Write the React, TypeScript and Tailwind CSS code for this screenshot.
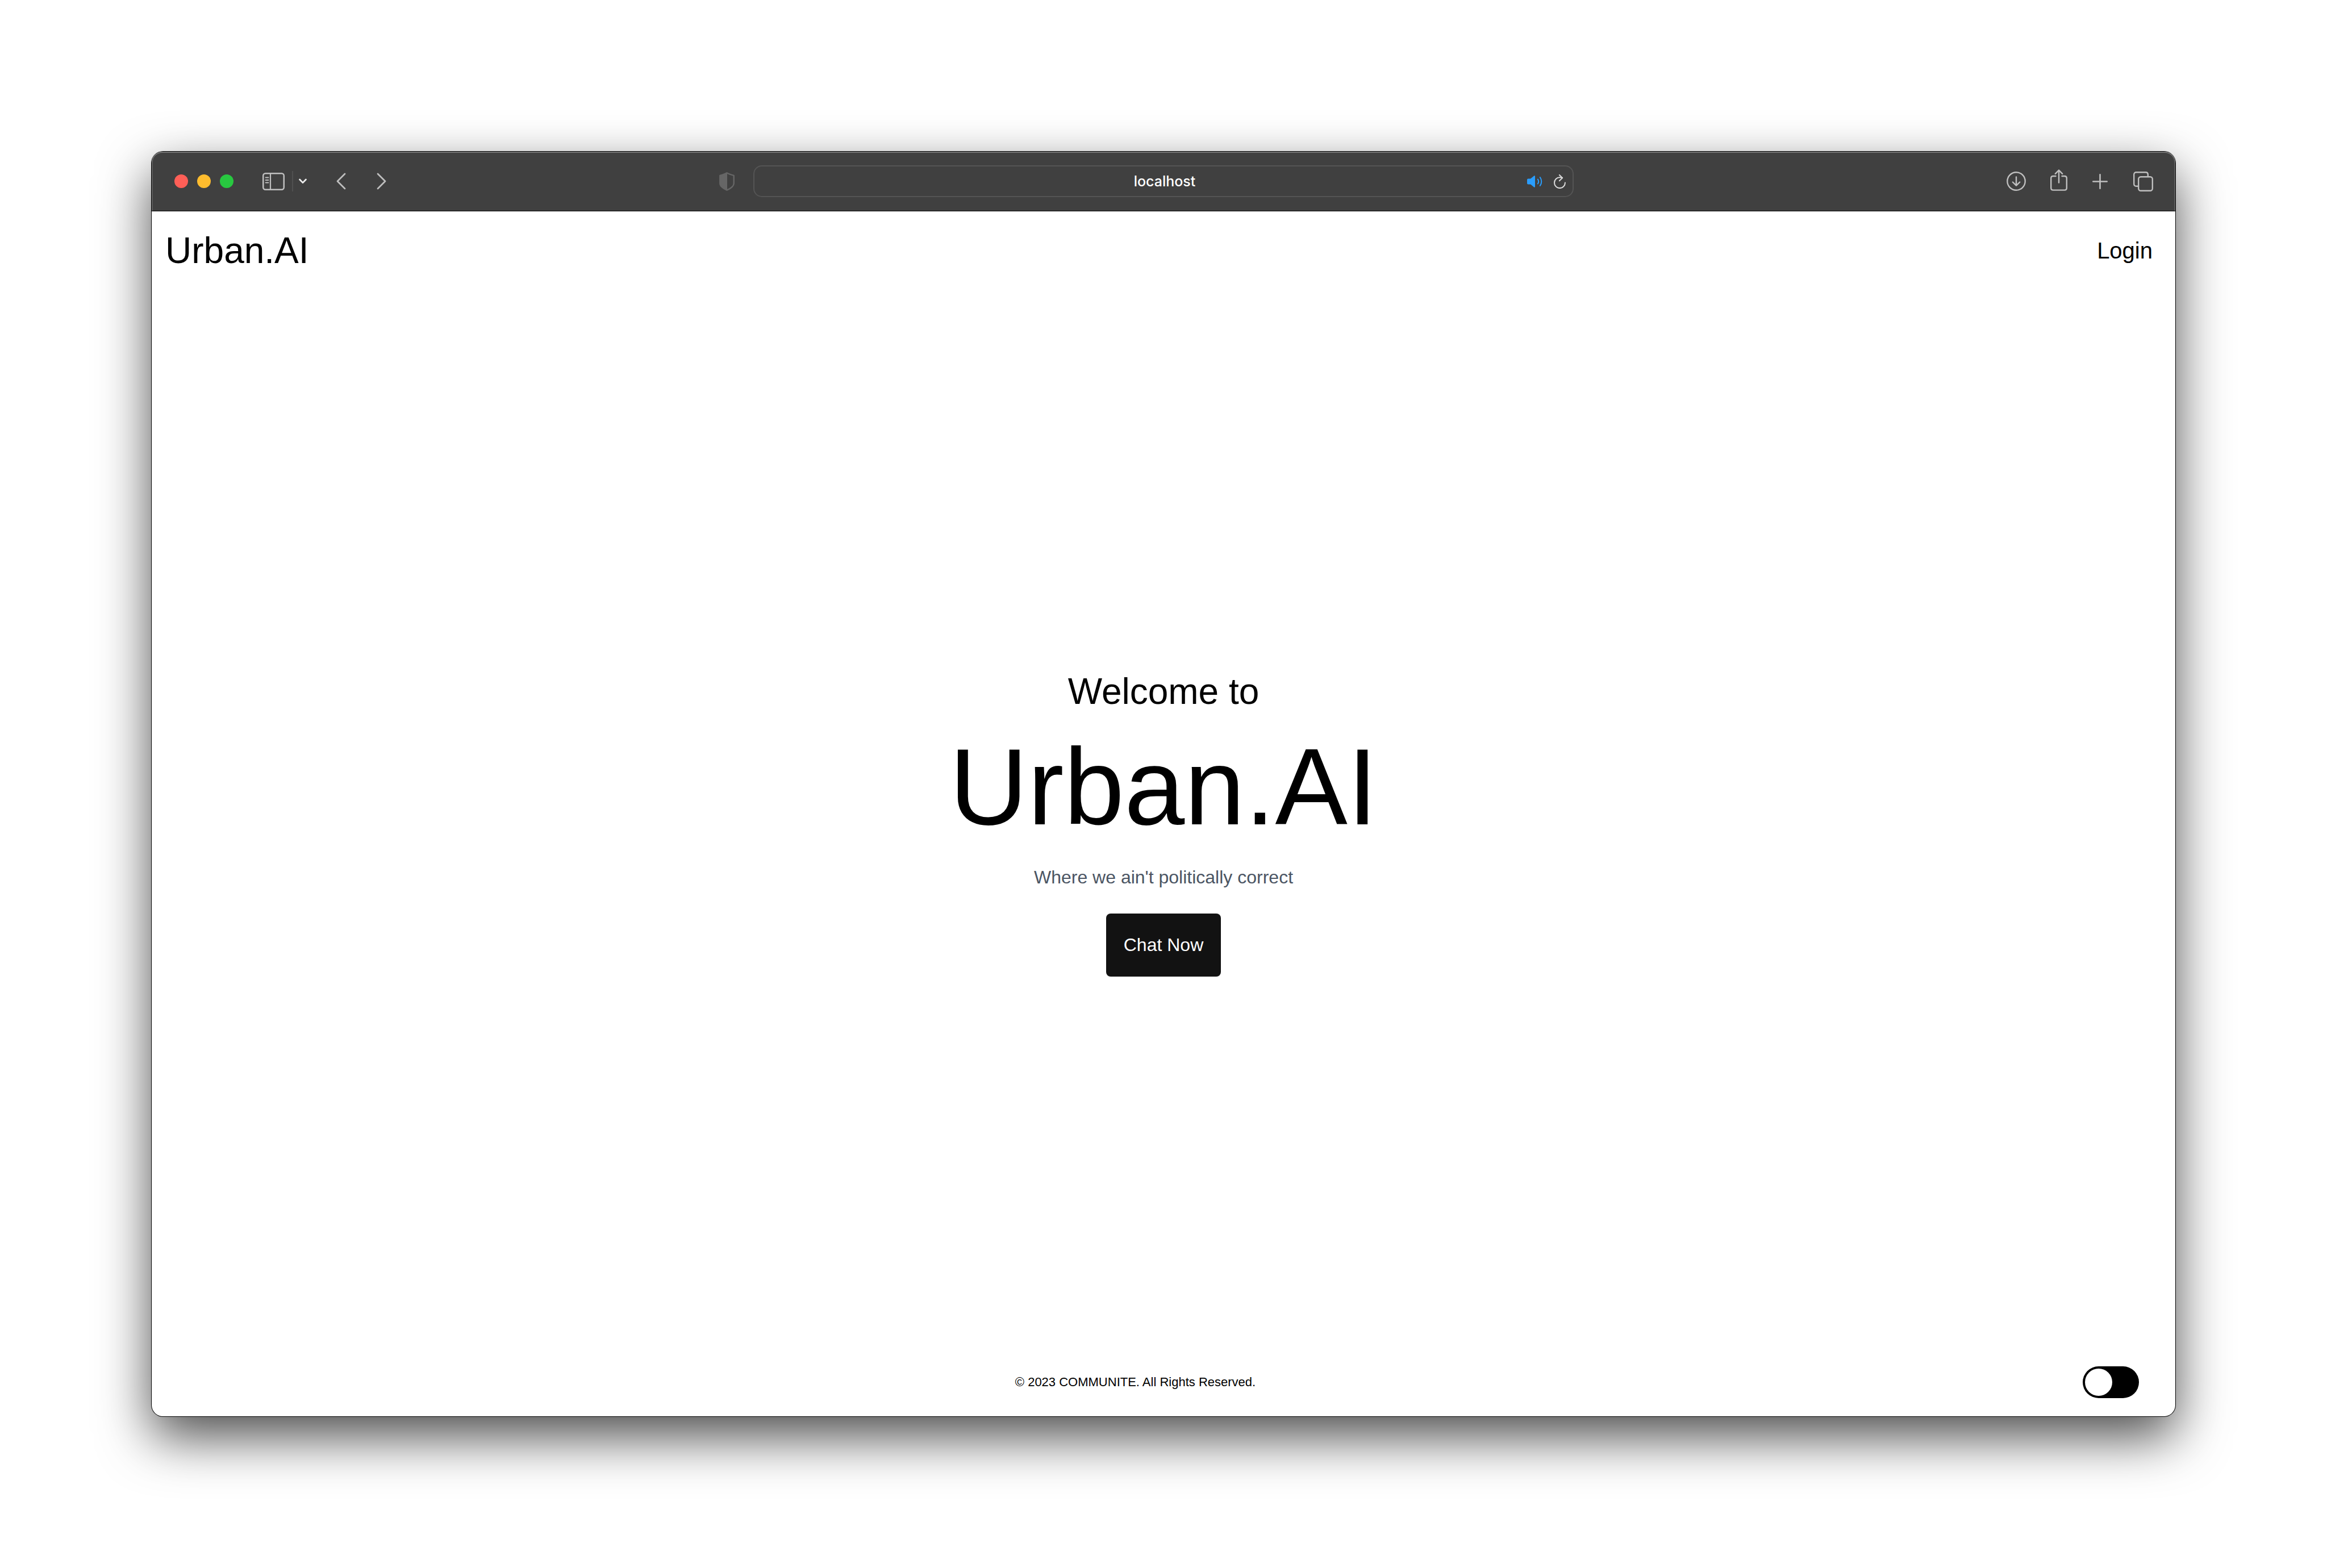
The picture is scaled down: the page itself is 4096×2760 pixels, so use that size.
import { useState } from "react";

const iconButton = "flex items-center justify-center shrink-0 text-[#bfbfbf]";

function WindowControls() {
  return (
    <div className="flex gap-4">
      <button aria-label="Close" className="size-6 rounded-full bg-[#ff5f57]" />
      <button aria-label="Minimize" className="size-6 rounded-full bg-[#febc2e]" />
      <button aria-label="Zoom" className="size-6 rounded-full bg-[#28c840]" />
    </div>
  );
}

function Toolbar() {
  return (
    <div className="grid h-[105px] grid-cols-[1fr_minmax(0,1444px)_1fr] items-center rounded-t-[19px] border-b border-black bg-[#404040] shadow-[inset_0_2px_0_#757575,inset_2px_0_0_#5c5c5c,inset_-2px_0_0_#5c5c5c]">
      <div className="flex items-center pl-10">
        <WindowControls />
        <button aria-label="Show sidebar" className={`${iconButton} ml-[51px]`}>
          <svg width="39" height="31" viewBox="0 0 39 31" fill="none" stroke="currentColor">
            <rect x="1.25" y="1.25" width="36.5" height="28.5" rx="4" strokeWidth="2.5" />
            <path d="M14 1v29" strokeWidth="2.2" />
            <path d="M5.500 8.500h5M5.500 13h5M5.500 17.500h5" strokeWidth="1.8" strokeLinecap="round" />
          </svg>
        </button>
        <span className="ml-[13px] h-9 w-0.5 bg-[#505050]" />
        <button aria-label="Tab groups" className="ml-[10px] text-[#ececec]">
          <svg width="14" height="10" viewBox="0 0 14 10" fill="none" stroke="currentColor" strokeWidth="2.8" strokeLinecap="round" strokeLinejoin="round">
            <path d="M1.6 2 7 7.6 12.4 2" />
          </svg>
        </button>
        <button aria-label="Back" className={`${iconButton} ml-[52px]`}>
          <svg width="17" height="30" viewBox="0 0 17 30" fill="none" stroke="currentColor" strokeWidth="2.8" strokeLinecap="round" strokeLinejoin="round">
            <path d="M15 2 2 15l13 13" />
          </svg>
        </button>
        <button aria-label="Forward" className={`${iconButton} ml-[54px]`}>
          <svg width="17" height="30" viewBox="0 0 17 30" fill="none" stroke="currentColor" strokeWidth="2.8" strokeLinecap="round" strokeLinejoin="round">
            <path d="m2 2 13 13L2 28" />
          </svg>
        </button>
        <button aria-label="Privacy report" className="mr-[33px] ml-auto text-[#666666]">
          <svg width="27" height="33" viewBox="0 0 27 33" fill="none">
            <path d="M13.5 1.3c3.2 2 7.200 3.300 12.200 4.600v14c0 5.200-5 8.400-12.200 11.800C6.300 28.300 1.300 25.100 1.300 19.900v-14c5-1.300 9-2.600 12.200-4.600z" stroke="currentColor" strokeWidth="2.4" strokeLinejoin="round" />
            <path d="M14 1v31C6.300 28.300 1 25.100 1 19.900v-14C6 4.600 10.300 3 14 1z" fill="currentColor" />
          </svg>
        </button>
      </div>

      <div className="relative flex h-14 items-center rounded-[15px] border-2 border-[#545454]">
        <input
          aria-label="Address"
          defaultValue="localhost"
          className="h-full w-full bg-transparent pl-1 text-center font-['Inter','Liberation_Sans',sans-serif] text-[25px] font-medium text-white outline-none"
        />
        <div className="absolute right-3 flex items-center gap-5">
          <button aria-label="Mute tab" className="text-[#2a9dfc]">
            <svg width="27" height="21" viewBox="0 0 27 21" fill="none">
              <path d="M0 7.500c0-1.200.8-2 2-2h4.200l6-4.900c.9-.8 1.800-.3 1.800.8v18.200c0 1.100-.9 1.600-1.800.8l-6-4.900H2c-1.200 0-2-.8-2-2z" fill="currentColor" />
              <path d="M18.800 6.500c1.700 2.500 1.700 5.500 0 8M22.800 3c3.300 4.500 3.300 10.500 0 15" stroke="currentColor" strokeWidth="2" strokeLinecap="round" />
            </svg>
          </button>
          <button aria-label="Reload" className="text-[#dcdcdc]">
            <svg width="21" height="25" viewBox="0 0 21 25" fill="none" stroke="currentColor" strokeWidth="2" strokeLinecap="round" strokeLinejoin="round">
              <path d="M19.900 14.500A9.450 9.450 0 1 1 10.500 5.200c1.700 0 3 .2 4.500.7" />
              <path d="m9.900 1 5.300 5.100-5.300 5.200" />
            </svg>
          </button>
        </div>
      </div>

      <div className="flex items-center justify-end pr-[39px]">
        <button aria-label="Downloads" className={iconButton}>
          <svg width="34" height="34" viewBox="0 0 34 34" fill="none" stroke="currentColor" strokeWidth="2.4" strokeLinecap="round" strokeLinejoin="round">
            <circle cx="17" cy="17" r="15.700" />
            <path d="M17 9.500v15M10.800 18.500l6.200 6.200 6.200-6.200" />
          </svg>
        </button>
        <button aria-label="Share" className={`${iconButton} mb-1 ml-[43px]`}>
          <svg width="30" height="38" viewBox="0 0 30 38" fill="none" stroke="currentColor" strokeWidth="2.4" strokeLinecap="round" strokeLinejoin="round">
            <path d="M9.500 12H5c-2.500 0-3.800 1.300-3.800 3.800v17c0 2.500 1.300 3.800 3.800 3.800h20c2.500 0 3.800-1.300 3.800-3.800v-17c0-2.500-1.300-3.800-3.800-3.800h-4.500" />
            <path d="M15 23.500V2M8.800 7.800 15 1.600l6.200 6.200" />
          </svg>
        </button>
        <button aria-label="New tab" className={`${iconButton} ml-[44px]`}>
          <svg width="27" height="27" viewBox="0 0 27 27" fill="none" stroke="currentColor" strokeWidth="2.6" strokeLinecap="round">
            <path d="M13.500 1.300v24.400M1.300 13.500h24.400" />
          </svg>
        </button>
        <button aria-label="Tab overview" className={`${iconButton} ml-[45px]`}>
          <svg width="35" height="35" viewBox="0 0 35 35" fill="none" stroke="currentColor" strokeWidth="2.400">
            <rect x="9.200" y="9.200" width="24.600" height="24.600" rx="4" />
            <path d="M9 25.800H5.200c-2.500 0-4-1.500-4-4V5.200c0-2.500 1.500-4 4-4h16.600c2.500 0 4 1.500 4 4V9" />
          </svg>
        </button>
      </div>
    </div>
  );
}

export default function App() {
  const [dark, setDark] = useState(false);

  return (
    <div className="flex min-h-screen bg-white p-[267px] font-['Liberation_Sans',Arial,sans-serif] text-black">
      <div className="flex flex-1 flex-col rounded-[20px] bg-white shadow-[0_0_0_1px_#000,0_36px_92px_rgba(0,0,0,0.7)]">
        <Toolbar />

        <header className="flex h-[138px] items-center justify-between pr-10 pl-6">
          <a href="#" className="text-[64px] leading-none">Urban.AI</a>
          <a href="#login" className="text-[40px] leading-none">Login</a>
        </header>

        <main className="flex flex-1 flex-col items-center justify-center pt-5">
          <h2 className="text-[64px] leading-[64px]">Welcome to</h2>
          <h1 className="mt-10 text-[191px] leading-[191px]">Urban.AI</h1>
          <p className="mt-10 text-[32px] leading-[48px] text-[#4b5563]">Where we ain't politically correct</p>
          <button className="mt-10 h-[111px] rounded-lg bg-[#121212] px-[31px] text-[32px] text-white">Chat Now</button>
        </main>

        <footer className="flex items-center justify-between px-16 py-8">
          <span />
          <p className="text-[22px] leading-8">© 2023 COMMUNITE. All Rights Reserved.</p>
          <label className="flex h-14 w-[99px] cursor-pointer items-center rounded-full bg-black p-1">
            <input
              type="checkbox"
              role="switch"
              aria-label="Dark mode"
              checked={dark}
              onChange={(e) => setDark(e.target.checked)}
              className="size-12 appearance-none rounded-full bg-white checked:translate-x-[43px]"
            />
          </label>
        </footer>
      </div>
    </div>
  );
}
